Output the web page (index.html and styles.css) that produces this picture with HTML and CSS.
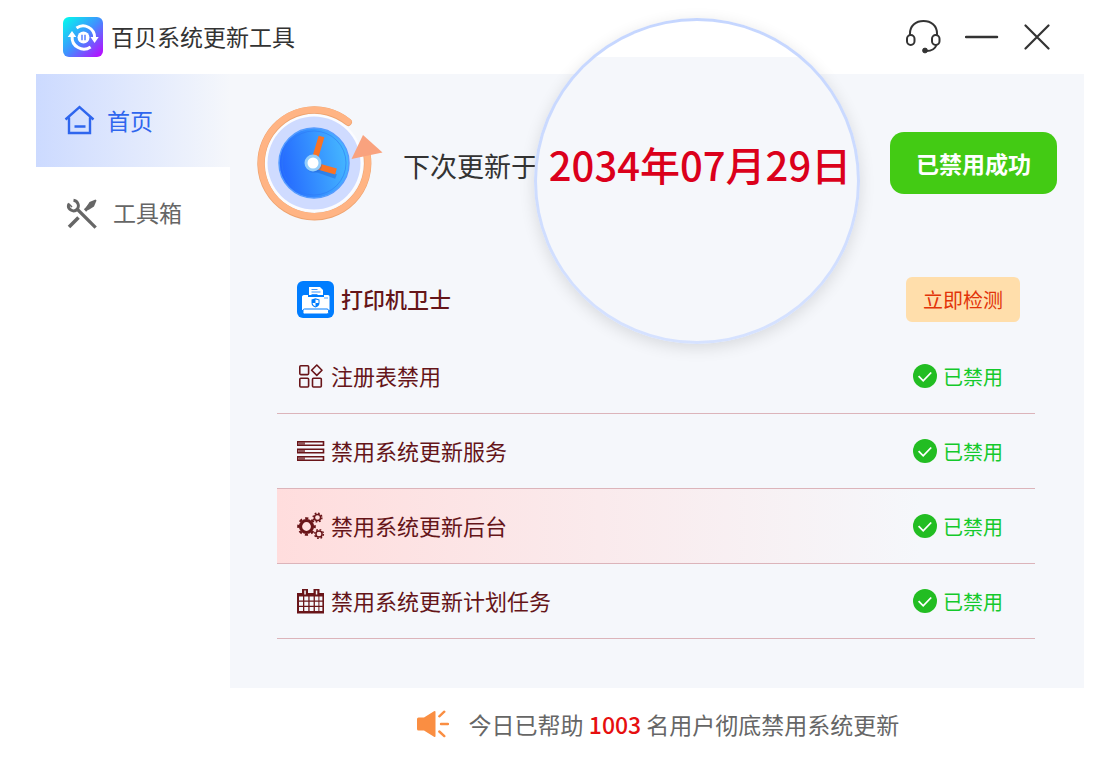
FILE: index.html
```html
<!DOCTYPE html>
<html lang="zh-CN">
<head>
  <meta charset="UTF-8">
  <meta name="viewport" content="width=device-width, initial-scale=1.0">
  <title>百贝系统更新工具</title>
  <link rel="stylesheet" href="styles.css">
</head>
<body>

  <!-- Shared icons -->
  <svg class="sprite" aria-hidden="true">
    <symbol id="icon-check" viewBox="0 0 24 24">
      <circle cx="12" cy="12" r="12" fill="#22bd22"/>
      <path d="M5.600 12.200l4.600 4.600 8-8.300" fill="none" stroke="#fff" stroke-width="1.800"/>
    </symbol>
  </svg>

  <div class="app">

    <!-- Title Bar -->
    <header class="titlebar">
      <svg class="logo" viewBox="0 0 40 40" aria-hidden="true">
        <defs>
          <linearGradient id="logo-bg" x1="0" y1="0" x2="1" y2="1">
            <stop offset="0" stop-color="#00ffec"/>
            <stop offset="0.5" stop-color="#4090ff"/>
            <stop offset="1" stop-color="#c400ff"/>
          </linearGradient>
        </defs>
        <rect width="40" height="40" rx="6" fill="url(#logo-bg)"/>
        <g fill="none" stroke="#fff" stroke-width="3">
          <path d="M13.500 11A11.500 11.500 0 0 1 31.600 20.500"/>
          <path d="M27.600 30A11.800 11.800 0 0 1 9.100 19.500"/>
        </g>
        <path d="M27.500 20h8.200l-4.100 6zM4.700 20h8.600L9 14z" fill="#fff"/>
        <circle cx="20.500" cy="20.500" r="6" fill="#fff"/>
        <path d="M19 17.700v5.600M22 17.700v5.600" stroke="#5b83ff" stroke-width="1.500"/>
      </svg>
      <h1>百贝系统更新工具</h1>
      <div class="window-buttons">
        <button type="button" aria-label="客服">
          <svg width="36" height="36" viewBox="0 0 36 36" fill="none" stroke="#333" stroke-width="2">
            <path d="M4 16v-1.500C4 6.500 10 2 17.500 2S31 6.500 31 14.500V16"/>
            <rect x="1" y="16" width="7.500" height="10" rx="3.700"/>
            <rect x="26" y="16" width="7.500" height="10" rx="3.700"/>
            <path d="M30.500 26c-1.500 4-5 6-10 6"/>
            <circle cx="19" cy="31.500" r="2.400" fill="#333" stroke-width="1"/>
          </svg>
        </button>
        <button type="button" aria-label="最小化">
          <svg width="36" height="36" viewBox="0 0 36 36"><path d="M1 18h31" stroke="#333" stroke-width="2.500" stroke-linecap="round"/></svg>
        </button>
        <button type="button" aria-label="关闭">
          <svg width="26" height="36" viewBox="0 0 26 36"><path d="M1.500 6.500l23 23M24.500 6.500l-23 23" stroke="#333" stroke-width="2.200" stroke-linecap="round"/></svg>
        </button>
      </div>
    </header>

    <div class="layout">

      <!-- Sidebar -->
      <nav class="sidebar">
        <a class="nav-item active" href="#">
          <svg width="32" height="32" viewBox="0 0 32 32" fill="none" stroke="#2f66ee" stroke-width="2.400">
            <path d="M1.500 14.500L15.500 2.200l14 12.300M5 12.500v15.500h21V12.500M10.500 21.500h11"/>
          </svg>
          <span>首页</span>
        </a>
        <a class="nav-item tools" href="#">
          <svg width="32" height="32" viewBox="0 0 32 32" fill="none" stroke="#666">
            <path d="M11.500 12.500l17 17" stroke-width="3.300" stroke-linecap="square"/>
            <path d="M3 30l9.500-9.500" stroke-width="3.600"/>
            <path d="M2.800 7a5 5 0 0 0 8.500 5A5.500 5.500 0 0 0 7.500 3.300" stroke-width="2.900"/>
            <path d="M2.200 6.200l3.800 3.800" stroke-width="1.500"/>
            <path d="M19 13.500l5-5" stroke-width="3.200"/>
            <path d="M20 10.500l3.500-5.500 6-2.500 1 1-2.500 6-5.500 3.500z" fill="#666" stroke="none"/>
          </svg>
          <span>工具箱</span>
        </a>
      </nav>

      <!-- Main Panel -->
      <main class="panel">
        <section class="hero">
          <svg class="clock" viewBox="0 0 128 116" aria-hidden="true">
            <defs>
              <linearGradient id="clock-face" x1="0" y1="0.600" x2="1" y2="0.400">
                <stop offset="0" stop-color="#2467ff"/>
                <stop offset="1" stop-color="#46b9ff"/>
              </linearGradient>
            </defs>
            <circle cx="57" cy="58" r="49" fill="#fbfcff"/>
            <circle cx="57" cy="58" r="46.500" fill="#cfdbff"/>
            <path d="M91.200 17.200A53.300 53.300 0 1 0 110 50" fill="none" stroke="#eea36f" stroke-width="7.500" stroke-linecap="round"/>
            <path d="M91.200 16.700A53.300 53.300 0 1 0 110 49" fill="none" stroke="#ffb484" stroke-width="6.500" stroke-linecap="round"/>
            <path d="M106 30l19.500 17.500-31 6.500z" fill="#f9a27e"/>
            <circle cx="57" cy="58" r="35" fill="url(#clock-face)" stroke="#559cff" stroke-width="1.500"/>
            <circle cx="57" cy="58" r="32" fill="none" stroke="#2f79f5" stroke-width="1" opacity="0.600"/>
            <path d="M56 63.500l23 8" stroke="#1856c8" stroke-width="5" opacity="0.350"/>
            <path d="M56 60l8.500-28.500M56 60l23 6.500" stroke="#f97325" stroke-width="6"/>
            <circle cx="57" cy="60" r="8" fill="#2466d8" opacity="0.350"/>
            <circle cx="56" cy="58" r="8.500" fill="#94cefb"/>
            <circle cx="56" cy="58" r="5.500" fill="#fff"/>
          </svg>
          <span class="hero-label">下次更新于</span>
          <div class="lens"><time datetime="2034-07-29">2034年07月29日</time></div>
          <button type="button" class="main-button">已禁用成功</button>
        </section>

        <ul class="list">
          <li class="row printer">
            <svg class="printer-icon" viewBox="0 0 37 37" aria-hidden="true">
              <rect width="37" height="37" rx="6" fill="#007dff"/>
              <path d="M12 14V6h11l3 3v5z" fill="#fff"/>
              <path d="M14.500 8.500h6M14.500 11h9M14.500 13.500h6" stroke="#3b96ff" stroke-width="1"/>
              <path d="M7 14h4v2h16v-2h4a1.500 1.500 0 0 1 1.500 1.500V29H5V15.500A2 2 0 0 1 7 14z" fill="#fff"/>
              <path d="M27 17h4" stroke="#6db2ff" stroke-width="1.200"/>
              <path d="M14.500 18.500l4-1.200 4 1.200v3.500q0 3-4 4.500-4-1.500-4-4.500z" fill="#007dff"/>
              <path d="M18.500 18.500v3.500h-3q0 2 3 3.500v-3.500h3v-2.700z" fill="#fff"/>
              <rect x="6" y="28" width="25.500" height="5" rx="1.500" fill="#fff" stroke="#007dff"/>
            </svg>
            <span class="name">打印机卫士</span>
            <button type="button" class="check-button">立即检测</button>
          </li>
          <li class="row">
            <svg class="row-icon" viewBox="0 0 28 28" fill="none" stroke="#691519" stroke-width="1.600" aria-hidden="true">
              <rect x="2.800" y="3.800" width="8.800" height="8.800" rx="1"/>
              <rect x="2.800" y="16.200" width="8.800" height="8.800" rx="1"/>
              <rect x="15.500" y="16.200" width="8.800" height="8.800" rx="1"/>
              <path d="M19.800 3l5.200 5.200-5.200 5.200-5.200-5.200z" stroke-linejoin="round"/>
            </svg>
            <span class="name">注册表禁用</span>
            <span class="status"><svg><use href="#icon-check"/></svg>已禁用</span>
          </li>
          <li class="row">
            <svg class="row-icon" viewBox="0 0 28 28" fill="none" stroke="#691519" stroke-width="1.600" aria-hidden="true">
              <path d="M.8 4.800h25.700v3.500H.8zM.8 12.300h25.700v3.500H.8zM.8 19.800h25.700v3.500H.8z"/>
              <path d="M2 6.500h6M2 14h6M2 21.500h6" stroke-width="2.500" opacity="0.700"/>
            </svg>
            <span class="name">禁用系统更新服务</span>
            <span class="status"><svg><use href="#icon-check"/></svg>已禁用</span>
          </li>
          <li class="row highlight">
            <svg class="row-icon" viewBox="0 0 28 28" fill="none" stroke="#691519" aria-hidden="true">
              <circle cx="9.500" cy="14.500" r="6" stroke-width="3.200"/>
              <circle cx="9.500" cy="14.500" r="8.300" stroke-width="2" stroke-dasharray="3.260 3.260" stroke-dashoffset="1.630"/>
              <circle cx="20.500" cy="5.500" r="3.100" stroke-width="1.500"/>
              <circle cx="20.500" cy="5.500" r="4.400" stroke-width="1.400" stroke-dasharray="1.730 1.730"/>
              <circle cx="22" cy="22" r="3.100" stroke-width="1.500"/>
              <circle cx="22" cy="22" r="4.400" stroke-width="1.400" stroke-dasharray="1.730 1.730"/>
            </svg>
            <span class="name">禁用系统更新后台</span>
            <span class="status"><svg><use href="#icon-check"/></svg>已禁用</span>
          </li>
          <li class="row">
            <svg class="row-icon" viewBox="0 0 28 28" aria-hidden="true">
              <path d="M0 6h27v20.500H0z" fill="#691519"/>
              <path d="M5 8V2h6v6zM16.500 8V2h6v6z" fill="#691519"/>
              <path d="M7.300 3.500h1.500v4H7.300zM18.800 3.500h1.500v4h-1.500z" fill="#f5f7fb"/>
              <path d="M2 9.500h4v4H2zM7.300 9.500h4v4h-4zM12.600 9.500h4v4h-4zM17.900 9.500h3.500v4h-3.500zM22.400 9.500h3v4h-3zM2 14.800h4v4H2zM7.300 14.800h4v4h-4zM12.600 14.800h4v4h-4zM17.900 14.800h3.500v4h-3.500zM22.400 14.800h3v4h-3zM2 20h4v4H2zM7.300 20h4v4h-4zM12.600 20h4v4h-4zM17.900 20h3.500v4h-3.500zM22.400 20h3v4h-3z" fill="#f5f7fb"/>
            </svg>
            <span class="name">禁用系统更新计划任务</span>
            <span class="status"><svg><use href="#icon-check"/></svg>已禁用</span>
          </li>
        </ul>
      </main>
    </div>

    <!-- Footer -->
    <footer class="footer">
      <svg width="32" height="28" viewBox="0 0 32 28" aria-hidden="true">
        <path d="M1.500 7.500H7L17 1.200q1.500-.8 1.500.8v24q0 1.600-1.500.8L7 20.500H1.500Q0 20.500 0 19V9q0-1.500 1.500-1.500z" fill="#fa8e42"/>
        <path d="M22.300 6.300l5-4.600M24 14h7M22.300 21.500l5 4.600" stroke="#fa8e42" stroke-width="2.400" stroke-linecap="round"/>
      </svg>
      <p>今日已帮助 <strong>1003</strong> 名用户彻底禁用系统更新</p>
    </footer>
  </div>

</body>
</html>
```

FILE: styles.css
```css
/* General Reset */
* {
  margin: 0;
  padding: 0;
  box-sizing: border-box;
}

body {
  background-color: #fff;
  color: #333;
  font-family: "Noto Sans CJK SC", "Noto Sans", sans-serif;
}

button {
  border: none;
  background: none;
  font-family: inherit;
  cursor: pointer;
}

svg {
  display: block;
  flex: none;
}

.sprite {
  display: none;
}

.app {
  padding: 0 36px;
}

/* Title Bar */
.titlebar {
  display: flex;
  align-items: center;
  gap: 8px;
  height: 74px;
  padding: 0 34px 0 27px;
}

.logo {
  width: 40px;
  height: 40px;
}

h1 {
  padding-bottom: 3px;
  font-size: 23px;
  font-weight: 400;
}

.window-buttons {
  display: flex;
  align-items: center;
  gap: 23px;
  margin-left: auto;
}

/* Layout */
.layout {
  display: flex;
}

.sidebar {
  width: 194px;
  flex: none;
}

.nav-item {
  display: flex;
  align-items: center;
  gap: 11px;
  height: 93px;
  padding-left: 28px;
  color: #666;
  font-size: 23px;
  text-decoration: none;
}

.nav-item span {
  padding-bottom: 2px;
}

.nav-item.active {
  color: #2f66ee;
  background: linear-gradient(90deg, #ccdaff, #f5f7fb);
}

.nav-item.tools {
  gap: 15px;
  height: 92px;
  padding-left: 30px;
}

.panel {
  flex: 1;
  padding-bottom: 49px;
  background-color: #f5f7fb;
}

/* Next update */
.hero {
  position: relative;
  display: flex;
  align-items: center;
  padding: 31px 27px 40px;
}

.clock {
  width: 128px;
  height: 116px;
}

.hero-label {
  margin-left: 18px;
  padding-top: 5px;
  font-size: 27px;
}

/* Magnifier over the date */
.lens {
  position: absolute;
  top: -56px;
  left: 304px;
  z-index: 1;
  display: flex;
  align-items: center;
  justify-content: center;
  width: 326px;
  height: 326px;
  padding: 0 0 34px 6px;
  border: 3px solid transparent;
  border-radius: 50%;
  background:
    linear-gradient(#fff 36px, #f5f7fb 36px) padding-box,
    linear-gradient(#c5d6ff, #d6e2ff) border-box;
  box-shadow: 0 4px 16px rgba(0, 0, 0, 0.12);
  color: #db001b;
  font-size: 40px;
  font-weight: 500;
  white-space: nowrap;
}

.main-button {
  height: 62px;
  margin-left: auto;
  padding: 0 26px;
  border-radius: 14px;
  background-color: #43cb14;
  color: #fff;
  font-size: 23px;
  font-weight: 700;
}

/* Settings list */
.list {
  margin: 0 49px 0 47px;
  list-style: none;
}

.row {
  display: flex;
  align-items: center;
  gap: 6px;
  height: 75px;
  padding: 0 32px 0 20px;
  border-bottom: 1px solid #dcb4ba;
  color: #651519;
  font-size: 22px;
}

.name {
  padding-bottom: 2px;
}

.row.printer {
  gap: 7px;
  height: 76px;
  margin-bottom: 2px;
  padding-right: 15px;
  border-bottom: none;
  font-weight: 500;
}

.row.highlight {
  background: linear-gradient(90deg, #ffdddd, #f5f7fb 85%);
}

.printer-icon {
  width: 37px;
  height: 37px;
}

.row-icon {
  width: 28px;
  height: 28px;
}

.status {
  display: flex;
  align-items: center;
  gap: 6px;
  margin-left: auto;
  color: #14c92b;
  font-size: 20px;
}

.status svg {
  width: 24px;
  height: 24px;
}

.check-button {
  height: 45px;
  margin-left: auto;
  padding: 0 17px;
  border-radius: 6px;
  background-color: #ffdeab;
  color: #e23409;
  font-size: 20px;
}

/* Footer */
.footer {
  display: flex;
  align-items: center;
  justify-content: center;
  gap: 20px;
  height: 72px;
  padding-left: 196px;
  color: #666;
  font-size: 23px;
}

.footer strong {
  color: #e60f0f;
  font-weight: 500;
}
```
